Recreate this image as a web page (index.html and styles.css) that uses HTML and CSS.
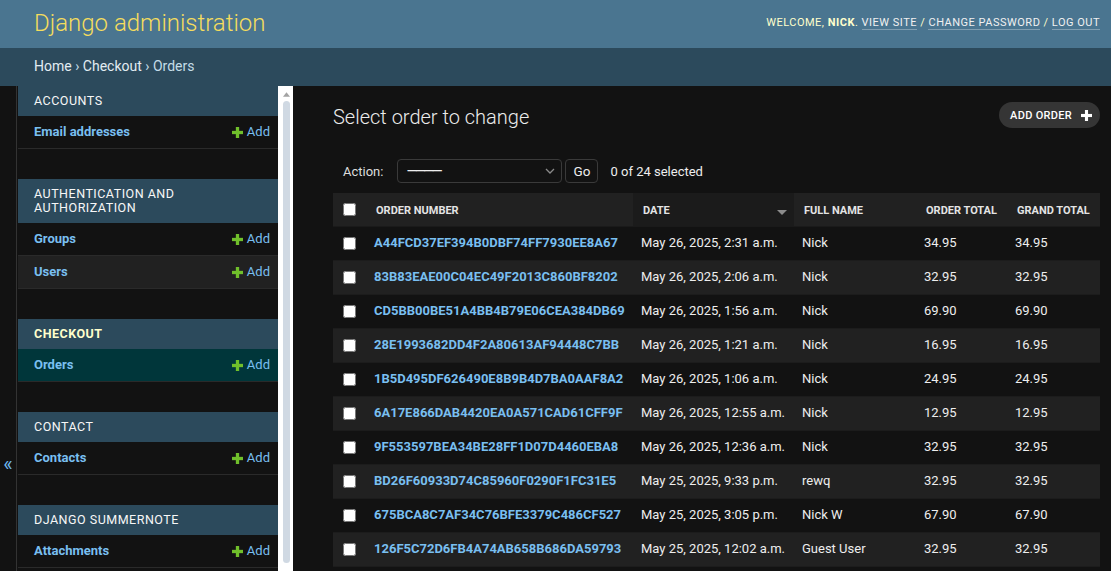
FILE: index.html
```html
<!DOCTYPE html>
<html lang="en">
<head>
<meta charset="utf-8">
<title>Select order to change | Django site admin</title>
<link rel="stylesheet" href="styles.css">
</head>
<body>
<header class="header">
  <div class="branding">Django administration</div>
  <div class="user-tools">Welcome, <strong>Nick</strong>. <a class="ut-link">View site</a> / <a class="ut-link">Change password</a> / <a class="ut-link">Log out</a></div>
</header>
<nav class="breadcrumbs"><a class="bc-link">Home</a> › <a class="bc-link">Checkout</a> › Orders</nav>
<div class="main">
  <div class="toggle"><span class="toggle-glyph">«</span></div>
  <div class="sidebar">
    <div class="nav">
      <div class="module">
        <div class="caption">Accounts</div>
        <div class="mrow"><a class="mlink">Email addresses</a><a class="addlink"><svg class="plus" viewBox="0 0 12 12"><rect x="4.2" y="0" width="3.6" height="12" fill="#70bf2b"/><rect x="0" y="4.2" width="12" height="3.6" fill="#70bf2b"/></svg>Add</a></div>
      </div>
      <div class="module">
        <div class="caption">Authentication and Authorization</div>
        <div class="mrow"><a class="mlink">Groups</a><a class="addlink"><svg class="plus" viewBox="0 0 12 12"><rect x="4.2" y="0" width="3.6" height="12" fill="#70bf2b"/><rect x="0" y="4.2" width="12" height="3.6" fill="#70bf2b"/></svg>Add</a></div>
        <div class="mrow hover"><a class="mlink">Users</a><a class="addlink"><svg class="plus" viewBox="0 0 12 12"><rect x="4.2" y="0" width="3.6" height="12" fill="#70bf2b"/><rect x="0" y="4.2" width="12" height="3.6" fill="#70bf2b"/></svg>Add</a></div>
      </div>
      <div class="module">
        <div class="caption current">Checkout</div>
        <div class="mrow selected"><a class="mlink">Orders</a><a class="addlink"><svg class="plus" viewBox="0 0 12 12"><rect x="4.2" y="0" width="3.6" height="12" fill="#70bf2b"/><rect x="0" y="4.2" width="12" height="3.6" fill="#70bf2b"/></svg>Add</a></div>
      </div>
      <div class="module">
        <div class="caption">Contact</div>
        <div class="mrow"><a class="mlink">Contacts</a><a class="addlink"><svg class="plus" viewBox="0 0 12 12"><rect x="4.2" y="0" width="3.6" height="12" fill="#70bf2b"/><rect x="0" y="4.2" width="12" height="3.6" fill="#70bf2b"/></svg>Add</a></div>
      </div>
      <div class="module">
        <div class="caption">Django Summernote</div>
        <div class="mrow"><a class="mlink">Attachments</a><a class="addlink"><svg class="plus" viewBox="0 0 12 12"><rect x="4.2" y="0" width="3.6" height="12" fill="#70bf2b"/><rect x="0" y="4.2" width="12" height="3.6" fill="#70bf2b"/></svg>Add</a></div>
      </div>
    </div>
    <div class="scrollbar">
      <svg class="sb-arrow" viewBox="0 0 8 5"><path d="M0 5 L4 0 L8 5 Z" fill="#a3a3a3"/></svg>
      <div class="sb-thumb"></div>
    </div>
  </div>
  <div class="content">
    <div class="content-head">
      <h1 class="title">Select order to change</h1>
      <a class="addbtn">Add order<svg class="addbtn-plus" viewBox="0 0 12 12"><rect x="4.3" y="0" width="3.4" height="12" fill="#fff"/><rect x="0" y="4.3" width="12" height="3.4" fill="#fff"/></svg></a>
    </div>
    <div class="actions">
      <label class="act-label">Action:</label>
      <div class="select"><span class="dashes">————</span><svg class="chev" viewBox="0 0 10 6"><path d="M1 1 L5 5 L9 1" fill="none" stroke="#8a8a8a" stroke-width="1.3"/></svg></div>
      <button class="go">Go</button>
      <span class="counter">0 of 24 selected</span>
    </div>
    <table class="results">
      <colgroup><col class="c-cb"><col class="c-num"><col class="c-date"><col class="c-name"><col class="c-ot"><col class="c-gt"></colgroup>
      <thead>
        <tr>
          <th class="th-cb"><input type="checkbox" class="cb"></th>
          <th>Order number</th>
          <th class="sorted"><div class="th-flex"><span>Date</span><svg class="sort" viewBox="0 0 10 5"><path d="M0 0 L10 0 L5 5 Z" fill="#8c8c8c"/></svg></div></th>
          <th>Full name</th>
          <th>Order total</th>
          <th>Grand total</th>
        </tr>
      </thead>
      <tbody>
        <tr><td class="td-cb"><input type="checkbox" class="cb"></td><td><a class="olink">A44FCD37EF394B0DBF74FF7930EE8A67</a></td><td>May 26, 2025, 2:31 a.m.</td><td>Nick</td><td>34.95</td><td>34.95</td></tr>
        <tr><td class="td-cb"><input type="checkbox" class="cb"></td><td><a class="olink">83B83EAE00C04EC49F2013C860BF8202</a></td><td>May 26, 2025, 2:06 a.m.</td><td>Nick</td><td>32.95</td><td>32.95</td></tr>
        <tr><td class="td-cb"><input type="checkbox" class="cb"></td><td><a class="olink">CD5BB00BE51A4BB4B79E06CEA384DB69</a></td><td>May 26, 2025, 1:56 a.m.</td><td>Nick</td><td>69.90</td><td>69.90</td></tr>
        <tr><td class="td-cb"><input type="checkbox" class="cb"></td><td><a class="olink">28E1993682DD4F2A80613AF94448C7BB</a></td><td>May 26, 2025, 1:21 a.m.</td><td>Nick</td><td>16.95</td><td>16.95</td></tr>
        <tr><td class="td-cb"><input type="checkbox" class="cb"></td><td><a class="olink">1B5D495DF626490E8B9B4D7BA0AAF8A2</a></td><td>May 26, 2025, 1:06 a.m.</td><td>Nick</td><td>24.95</td><td>24.95</td></tr>
        <tr><td class="td-cb"><input type="checkbox" class="cb"></td><td><a class="olink">6A17E866DAB4420EA0A571CAD61CFF9F</a></td><td>May 26, 2025, 12:55 a.m.</td><td>Nick</td><td>12.95</td><td>12.95</td></tr>
        <tr><td class="td-cb"><input type="checkbox" class="cb"></td><td><a class="olink">9F553597BEA34BE28FF1D07D4460EBA8</a></td><td>May 26, 2025, 12:36 a.m.</td><td>Nick</td><td>32.95</td><td>32.95</td></tr>
        <tr><td class="td-cb"><input type="checkbox" class="cb"></td><td><a class="olink">BD26F60933D74C85960F0290F1FC31E5</a></td><td>May 25, 2025, 9:33 p.m.</td><td>rewq</td><td>32.95</td><td>32.95</td></tr>
        <tr><td class="td-cb"><input type="checkbox" class="cb"></td><td><a class="olink">675BCA8C7AF34C76BFE3379C486CF527</a></td><td>May 25, 2025, 3:05 p.m.</td><td>Nick W</td><td>67.90</td><td>67.90</td></tr>
        <tr><td class="td-cb"><input type="checkbox" class="cb"></td><td><a class="olink">126F5C72D6FB4A74AB658B686DA59793</a></td><td>May 25, 2025, 12:02 a.m.</td><td>Guest User</td><td>32.95</td><td>32.95</td></tr>
      </tbody>
    </table>
  </div>
</div>
</body>
</html>
```
FILE: styles.css
```css
* { box-sizing: border-box; }
html, body { margin: 0; padding: 0; }
body {
  background: #121212;
  color: #eeeeee;
  font-family: Roboto, "Liberation Sans", Arial, sans-serif;
  font-size: 13px;
  height: 571px;
  overflow: hidden;
}
a { text-decoration: none; cursor: pointer; }

/* header */
.header {
  height: 48px;
  background: #4a7590;
  display: flex;
  align-items: center;
  justify-content: space-between;
  padding: 0 11px 0 34px;
}
.branding {
  color: #f5dd5d;
  font-size: 24px;
  font-weight: 300;
  line-height: 28px;
  margin-top: -2px;
}
.user-tools {
  color: #ffffcc;
  font-size: 11px;
  letter-spacing: 0.5px;
  text-transform: uppercase;
  line-height: 14px;
  margin-top: -2px;
}
.user-tools strong { font-weight: 700; }
.ut-link {
  color: #f0f0f0;
  border-bottom: 1px solid rgba(255,255,255,0.3);
}

/* breadcrumbs */
.breadcrumbs {
  height: 38px;
  background: #2c4a5c;
  color: #c4dce8;
  font-size: 14px;
  line-height: 37px;
  padding: 0 34px;
}
.bc-link { color: #e2ecf2; }

/* main */
.main {
  display: flex;
  height: 485px;
  overflow: hidden;
}
.toggle {
  flex: 0 0 17px;
  border-right: 1px solid #333333;
  padding-top: 368px;
  text-align: center;
}
.toggle-glyph {
  color: #6fb8ee;
  font-size: 20px;
  line-height: 20px;
}
.sidebar {
  flex: 0 0 275px;
  margin-left: 1px;
  display: flex;
}
.nav {
  width: 260px;
  overflow: hidden;
}
.module { margin-bottom: 30px; }
.caption {
  background: #2c4a5c;
  color: #f7f7f7;
  font-size: 12.5px;
  line-height: 14px;
  letter-spacing: 0.5px;
  text-transform: uppercase;
  padding: 8px 8px 8px 16px;
}
.caption.current {
  color: #ffffcc;
  font-weight: 700;
}
.mrow {
  display: flex;
  justify-content: space-between;
  align-items: center;
  padding: 8px 8px 8px 16px;
  line-height: 16px;
  border-bottom: 1px solid #2a2a2a;
}
.mrow.hover { background: #212121; }
.mrow.selected { background: #00363a; }
.mlink {
  color: #79bff0;
  font-weight: 700;
}
.addlink {
  color: #79bff0;
  display: flex;
  align-items: center;
}
.plus {
  width: 11px;
  height: 11px;
  margin-right: 4px;
}
.scrollbar {
  flex: 0 0 15px;
  background: #ffffff;
  display: flex;
  flex-direction: column;
  align-items: center;
  padding-top: 6px;
}
.sb-arrow {
  width: 7px;
  height: 5px;
  margin-left: 1px;
}
.sb-thumb {
  width: 7px;
  height: 462px;
  margin-top: 4px;
  margin-left: 1px;
  background: #d0d9e3;
  border-radius: 4px;
}

/* content */
.content {
  flex: 1;
  padding: 16px 11px 0 40px;
  min-width: 0;
  overflow: hidden;
}
.content-head {
  display: flex;
  justify-content: space-between;
  align-items: center;
  height: 26px;
}
.title {
  margin: 0;
  padding-top: 3px;
  font-size: 20px;
  font-weight: 300;
  line-height: 24px;
  color: #ececec;
}
.addbtn {
  display: flex;
  align-items: center;
  height: 26px;
  padding: 0 8px 0 11px;
  border-radius: 13px;
  background: #353535;
  color: #ffffff;
  font-size: 11px;
  font-weight: 500;
  letter-spacing: 0.3px;
  text-transform: uppercase;
}
.addbtn-plus {
  width: 11px;
  height: 11px;
  margin-left: 9px;
}
.actions {
  margin-top: 21px;
  padding: 10px;
  display: flex;
  align-items: center;
  height: 44px;
  color: #dddddd;
}
.act-label {
  font-size: 13px;
  margin-right: 14px;
}
.select {
  width: 165px;
  height: 24px;
  border: 1px solid #3a3a3a;
  border-radius: 4px;
  display: flex;
  align-items: center;
  justify-content: space-between;
  padding: 0 6px 0 8px;
  color: #eeeeee;
}
.dashes { font-size: 14px; letter-spacing: -2.5px; }
.chev { width: 10px; height: 6px; }
.go {
  margin-left: 3px;
  width: 33px;
  height: 24px;
  border: 1px solid #3a3a3a;
  border-radius: 4px;
  background: #121212;
  color: #eeeeee;
  font-family: Roboto, "Liberation Sans", Arial, sans-serif;
  font-size: 13.5px;
  padding: 0;
}
.counter {
  margin-left: 12px;
  font-size: 13px;
  color: #eeeeee;
}

/* table */
.results {
  width: 767px;
  border-collapse: collapse;
  table-layout: fixed;
}
.c-cb { width: 33px; }
.c-num { width: 267px; }
.c-date { width: 161px; }
.c-name { width: 122px; }
.c-ot { width: 91px; }
.c-gt { width: 93px; }
.results thead th {
  background: #212121;
  color: #e4e4e4;
  font-size: 11px;
  font-weight: 700;
  text-transform: uppercase;
  text-align: left;
  line-height: 16px;
  padding: 10px 10px 7px;
  border-bottom: 1px solid #1a1a1a;
  white-space: nowrap;
}
.results thead th.sorted { background: #1b1b1b; padding-right: 7px; }
.results thead th.th-cb { padding: 8px 0 9px 10px; }
.th-flex {
  display: flex;
  justify-content: space-between;
  align-items: center;
}
.sort { width: 10px; height: 5px; margin-top: 2px; }
.results tbody td {
  padding: 7px 8px 9px;
  line-height: 17px;
  border-bottom: 1px solid #1c1c1c;
  white-space: nowrap;
  overflow: hidden;
}
.results tbody td.td-cb { padding: 7px 0 9px 10px; }
.results tbody tr:nth-child(even) td { background: #212121; }
.cb {
  width: 13px;
  height: 13px;
  margin: 0;
  vertical-align: middle;
}
.olink {
  color: #79bff0;
  font-weight: 700;
}
```
